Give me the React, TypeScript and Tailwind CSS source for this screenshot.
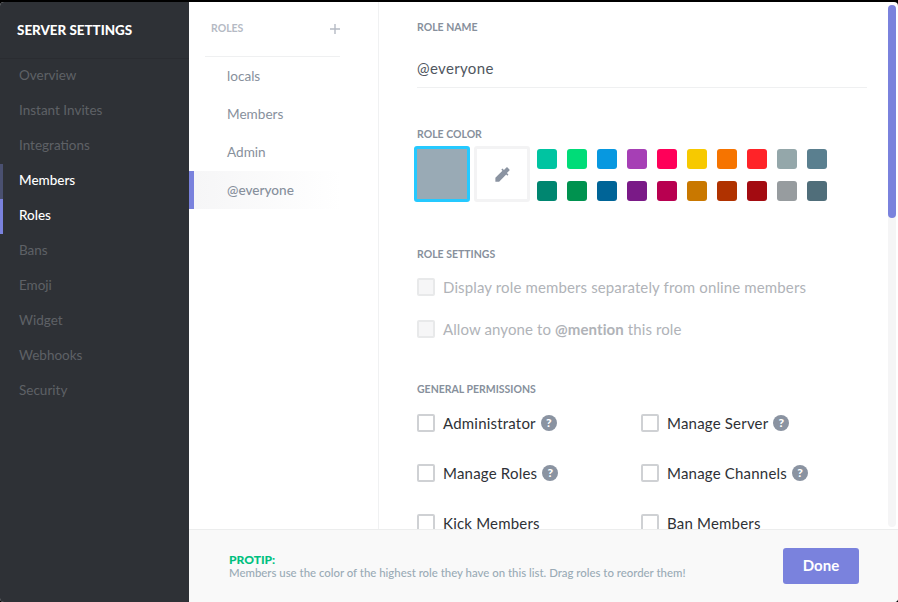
import React from 'react';

const navItems = ['Overview', 'Instant Invites', 'Integrations', 'Members', 'Roles', 'Bans', 'Emoji', 'Widget', 'Webhooks', 'Security'];
const roles = ['locals', 'Members', 'Admin', '@everyone'];
const brightColors = ['#00c4a1', '#00dc78', '#0798e0', '#a63fb5', '#ff0059', '#f7c900', '#f67400', '#ff2328', '#94a7aa', '#5a7f8f'];
const darkColors = ['#008670', '#00924f', '#006497', '#7a1a87', '#b80050', '#c97800', '#b03200', '#a30b11', '#979c9f', '#506e7a'];

const permissions = [
  ['Administrator', 'Manage Server'],
  ['Manage Roles', 'Manage Channels'],
  ['Kick Members', 'Ban Members'],
];

function Help() {
  return (
    <span className="ml-[5px] flex h-4 w-4 items-center justify-center rounded-full bg-[#8a93a1] text-[12px] font-black leading-none text-white">?</span>
  );
}

function Permission({ label, help }: { label: string; help: boolean }) {
  return (
    <div className="flex h-[18px] w-[224px] items-center">
      <span className="h-[18px] w-[18px] shrink-0 rounded-[2px] border-2 border-[#cfd1d4] bg-white" />
      <span className="ml-2 text-[15px] leading-[18px] tracking-[0.2px] text-[#2e3136]">{label}</span>
      {help && <Help />}
    </div>
  );
}

function Label({ children }: { children: React.ReactNode }) {
  return <div className="text-[10.5px] font-bold uppercase leading-[14px] text-[#87909c]">{children}</div>;
}

export default function App() {
  return (
    <div className="h-[602px] w-[898px] overflow-hidden bg-black pt-[2px] font-['Lato',sans-serif]">
      <div className="flex h-[600px] overflow-hidden rounded-[4px] bg-white">
        {/* sidebar */}
        <aside className="w-[189px] shrink-0 bg-[#2e3136]">
          <div className="flex h-[57px] items-center border-b border-[#2a2c31] pl-[17px]">
            <h1 className="text-[13.4px] font-black uppercase text-white">Server Settings</h1>
          </div>
          <nav>
            {navItems.map(item => {
              const active = item === 'Members' || item === 'Roles';
              return (
                <div
                  key={item}
                  className={`flex h-[35px] items-center border-l-[3px] pb-[2px] pl-4 text-[13.5px] ${
                    item === 'Roles' ? 'border-[#7a82dd]' : item === 'Members' ? 'border-[#4a5070]' : 'border-transparent'
                  } ${active ? 'font-medium text-white' : 'text-[#5e6166]'}`}
                >
                  {item}
                </div>
              );
            })}
          </nav>
        </aside>

        <main className="flex min-w-0 flex-1 flex-col">
          <div className="flex h-[527px] overflow-hidden">
            {/* roles column */}
            <section className="w-[190px] shrink-0 border-r border-[#f0f1f2]">
              <div className="ml-4 mr-[38px] flex h-[55px] items-center justify-between border-b border-[#eff0f1] pl-[6px]">
                <span className="text-[10.5px] font-bold uppercase text-[#b5bac4]">Roles</span>
                <svg width="10" height="10" viewBox="0 0 10 10">
                  <path d="M5 0v10M0 5h10" stroke="#b5bac4" strokeWidth="1.4" />
                </svg>
              </div>
              <ul>
                {roles.map(role => {
                  const selected = role === '@everyone';
                  return (
                    <li
                      key={role}
                      className={`flex h-[38px] items-center border-l-[5px] pl-[33px] text-[13.6px] text-[#87909c] ${
                        selected ? 'border-[#7a82dd] bg-gradient-to-r from-[#f6f6f7] to-white to-80% font-medium' : 'border-transparent'
                      }`}
                    >
                      {role}
                    </li>
                  );
                })}
              </ul>
            </section>

            {/* role form */}
            <section className="relative min-w-0 flex-1 overflow-hidden pl-[38px] pt-[18px]">
              <Label>Role Name</Label>
              <div className="mr-[31px] mt-5 h-[34px] border-b border-[#eff0f1] text-[15px] leading-[28px] tracking-[0.35px] text-[#4f5660]">
                @everyone
              </div>

              <div className="mt-[39px]"><Label>Role Color</Label></div>
              <div className="-ml-[3px] mt-[5px] flex">
                <div className="h-14 w-14 rounded-[3px] border-[3px] border-[#25c9ff] bg-[#99aab5]" />
                <div className="ml-[4px] flex h-14 w-14 items-center justify-center rounded-[3px] border-[3px] border-[#f3f3f4] bg-white">
                  <svg width="19" height="19" viewBox="0 0 24 24" fill="#8a93a1">
                    <path d="M20.71 5.63l-2.34-2.34c-.39-.39-1.02-.39-1.41 0l-3.12 3.12-1.93-1.91-1.41 1.41 1.42 1.42L3 16.25V21h4.75l8.92-8.92 1.42 1.42 1.41-1.41-1.92-1.92 3.12-3.12c.4-.4.4-1.03.01-1.42z" />
                  </svg>
                </div>
                <div className="ml-[7px] grid grid-cols-[repeat(10,20px)] gap-[10px] pt-[3px]">
                  {brightColors.concat(darkColors).map((color, i) => (
                    <span key={i} className="h-5 w-5 rounded-[3px]" style={{ backgroundColor: color }} />
                  ))}
                </div>
              </div>

              <div className="mt-[45px]"><Label>Role Settings</Label></div>
              <div className="mt-[17px] flex h-[18px] items-center">
                <span className="h-[18px] w-[18px] rounded-[2px] border-2 border-[#e8e9ea] bg-[#f6f6f7]" />
                <span className="ml-[8px] text-[15px] tracking-[0.13px] text-[#b0b3b8]">Display role members separately from online members</span>
              </div>
              <div className="mt-[24px] flex h-[18px] items-center">
                <span className="h-[18px] w-[18px] rounded-[2px] border-2 border-[#e8e9ea] bg-[#f6f6f7]" />
                <span className="ml-[8px] text-[15px] tracking-[0.1px] text-[#b0b3b8]">
                  Allow anyone to <b className="font-bold">@mention</b> this role
                </span>
              </div>

              <div className="mt-[44px]"><Label>General Permissions</Label></div>
              <div className="mt-[18px] flex flex-col gap-8">
                {permissions.map((row, i) => (
                  <div key={i} className="flex">
                    <Permission label={row[0]} help={i < 2} />
                    <Permission label={row[1]} help={i < 2} />
                  </div>
                ))}
              </div>

              {/* scrollbar */}
              <div className="absolute right-[2px] top-[3px] h-[522px] w-2 rounded-full bg-[#f5f5f6]">
                <div className="h-[213px] w-2 rounded-full bg-[#7a82dd]" />
              </div>
            </section>
          </div>

          {/* footer */}
          <footer className="flex h-[73px] items-center justify-between border-t border-[#eceded] bg-[#f9f9f9] pl-10 pr-[39px]">
            <div className="pt-[1px]">
              <div className="text-[12px] font-black uppercase leading-[12px] text-[#00c07f]">Protip:</div>
              <div className="text-[11.4px] font-medium leading-[13px] text-[#9aabb6]">
                Members use the color of the highest role they have on this list. Drag roles to reorder them!
              </div>
            </div>
            <button className="h-9 w-[76px] rounded-[3px] bg-[#7a82dd] pb-[1px] text-[15px] font-bold text-white">Done</button>
          </footer>
        </main>
      </div>
    </div>
  );
}
